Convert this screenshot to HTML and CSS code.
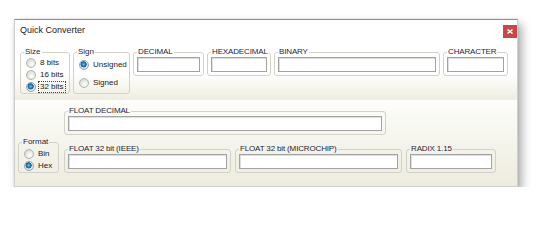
FILE: index.html
```html
<!DOCTYPE html>
<html>
<head>
<meta charset="utf-8">
<title>Quick Converter</title>
<link rel="stylesheet" href="styles.css">
</head>
<body>
<div class="window">
  <div class="top-panel">
    <div class="titlebar">
      <span class="title">Quick Converter</span>
      <button class="close" type="button" aria-label="Close">
        <svg width="6" height="5" viewBox="0 0 6 5"><path d="M0.5 0.5 L5.5 4.5 M5.5 0.5 L0.5 4.5" stroke="#fff" stroke-width="1.4" fill="none"/></svg>
      </button>
    </div>
    <div class="top-row">
      <fieldset class="group radios size">
        <legend>Size</legend>
        <label class="radio"><span class="dot"></span><span class="txt">8 bits</span></label>
        <label class="radio"><span class="dot"></span><span class="txt">16 bits</span></label>
        <label class="radio"><span class="dot checked"></span><span class="txt focus">32 bits</span></label>
      </fieldset>
      <fieldset class="group radios sign">
        <legend>Sign</legend>
        <label class="radio"><span class="dot checked"></span><span class="txt">Unsigned</span></label>
        <label class="radio"><span class="dot"></span><span class="txt">Signed</span></label>
      </fieldset>
      <fieldset class="group field w-decimal">
        <legend>DECIMAL</legend>
        <input class="box" type="text">
      </fieldset>
      <fieldset class="group field w-hex">
        <legend>HEXADECIMAL</legend>
        <input class="box" type="text">
      </fieldset>
      <fieldset class="group field w-binary">
        <legend>BINARY</legend>
        <input class="box" type="text">
      </fieldset>
      <fieldset class="group field w-char">
        <legend>CHARACTER</legend>
        <input class="box" type="text">
      </fieldset>
    </div>
  </div>
  <div class="bottom-panel">
    <div class="bottom-grid">
      <fieldset class="group field w-floatdec span2">
        <legend>FLOAT DECIMAL</legend>
        <input class="box" type="text">
      </fieldset>
      <fieldset class="group radios format">
        <legend>Format</legend>
        <label class="radio"><span class="dot"></span><span class="txt">Bin</span></label>
        <label class="radio"><span class="dot checked"></span><span class="txt">Hex</span></label>
      </fieldset>
      <div class="float-row">
        <fieldset class="group field w-float32">
          <legend>FLOAT 32 bit (IEEE)</legend>
          <input class="box" type="text">
        </fieldset>
        <fieldset class="group field w-float32">
          <legend>FLOAT 32 bit (MICROCHIP)</legend>
          <input class="box" type="text">
        </fieldset>
        <fieldset class="group field w-radix">
          <legend>RADIX 1.15</legend>
          <input class="box" type="text">
        </fieldset>
      </div>
    </div>
  </div>
</div>
</body>
</html>
```
FILE: styles.css
```css
html, body {
  margin: 0;
  padding: 0;
  background: #ffffff;
}
body {
  font-family: "Liberation Sans", Arial, sans-serif;
  font-size: 8px;
  color: #222;
}
.window {
  margin: 19px 0 0 14px;
  width: 504px;
  height: 168px;
  box-sizing: border-box;
  border: 1px solid #cfcfcf;
  border-top: 1px solid #5e9bd3;
  box-shadow: 4px 5px 9px rgba(0,0,0,0.32), 0 0 2px rgba(0,0,0,0.12);
  display: flex;
  flex-direction: column;
  background: #fff;
}
.top-panel {
  height: 80px;
  box-sizing: border-box;
  padding: 0 0 0 5px;
  background: linear-gradient(to bottom, #ffffff 0%, #ffffff 66%, #efede1 100%);
}
.titlebar {
  height: 28px;
  box-sizing: border-box;
  padding-top: 5px;
  display: flex;
  justify-content: space-between;
  align-items: flex-start;
}
.title {
  font-size: 9px;
  line-height: 11px;
  color: #1a1a1a;
}
.close {
  width: 14px;
  height: 13px;
  padding: 0;
  border: none;
  background: #c9464b;
  display: flex;
  align-items: center;
  justify-content: center;
}
.close svg { display: block; }

.top-row {
  display: flex;
  gap: 3px;
  align-items: flex-start;
}
.group {
  margin: 0;
  box-sizing: border-box;
  border: 1px solid #d3d1c8;
  border-radius: 3px;
  min-width: 0;
}
.group legend {
  font-size: 8px;
  line-height: 8px;
  height: 8px;
  padding: 0 1px;
  margin-left: 0;
  color: #1f1f3a;
  letter-spacing: -0.15px;
  white-space: nowrap;
}
.field {
  padding: 1px 3px 3px 3px;
}
.box {
  display: block;
  width: 100%;
  height: 15px;
  box-sizing: border-box;
  margin: 0;
  padding: 0 2px;
  border: 1px solid #a3a3a3;
  box-shadow: inset 1px 1px 0 #dedede;
  background: #fff;
  font: inherit;
}
.radios {
  padding: 1px 0 0 5px;
  display: flex;
  flex-direction: column;
}
.radios legend {
  margin-left: -2px;
  letter-spacing: 0;
}
.size { width: 50px; }
.sign { width: 57px; padding-top: 3px; padding-bottom: 4px; gap: 6px; }
.format { width: 41px; padding-top: 2px; }
.w-decimal { width: 71px; }
.w-hex { width: 64px; }
.w-binary { width: 166px; }
.w-char { width: 65px; }

.radio {
  display: flex;
  align-items: center;
  height: 12px;
}
.dot {
  width: 10px;
  height: 10px;
  box-sizing: border-box;
  border-radius: 50%;
  border: 1px solid #b4b4b0;
  background: radial-gradient(circle at 60% 65%, #ffffff 0, #f2f2ee 2px, #dcdcd6 5px);
  flex: none;
}
.dot.checked {
  border-color: #8ea7b8;
  background: radial-gradient(circle at 45% 42%, #7cc8ee 0, #2a82bb 1.6px, #1d5c8a 2.8px, #e9ecee 3.4px, #d6dade 5px);
}
.txt {
  margin-left: 2px;
  padding: 0 1px;
  border: 1px dotted transparent;
  line-height: 10px;
  white-space: nowrap;
  color: #222;
}
.txt.focus {
  border-color: #444;
}

.bottom-panel {
  flex: 1;
  box-sizing: border-box;
  padding: 7px 0 0 3px;
  background: linear-gradient(to bottom, #fdfdfa 0%, #f5f4ec 50%, #eeecdf 100%);
}
.bottom-grid {
  display: grid;
  grid-template-columns: 41px auto;
  column-gap: 5px;
  row-gap: 3px;
  align-items: end;
  justify-items: start;
}
.span2 { grid-column: 2; }
.w-floatdec { width: 322px; }
.float-row {
  display: flex;
  gap: 4px;
  align-items: flex-end;
}
.w-float32 { width: 167px; }
.w-radix { width: 90px; }
```
